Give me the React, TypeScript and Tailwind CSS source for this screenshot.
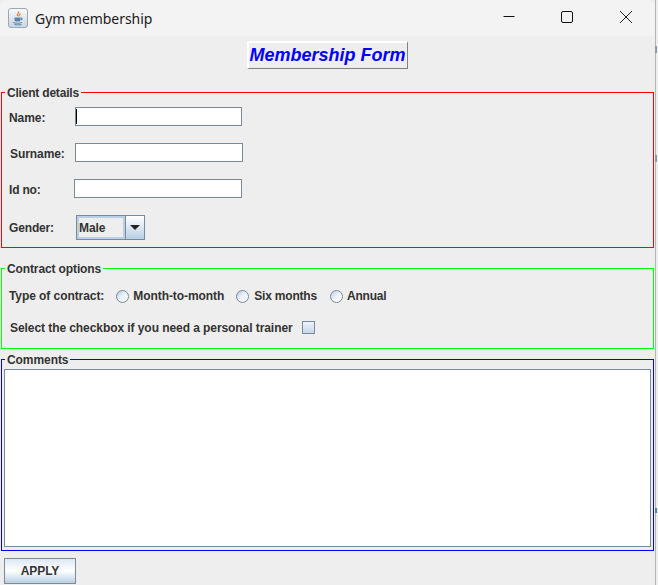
import React from "react";

const TextBox: React.FC<{ className?: string; caret?: boolean }> = ({ className = "", caret }) => (
  <div className={`h-[19px] bg-white border border-[#7a8a99] flex items-center ${className}`}>
    {caret && <div className="w-px h-[15px] bg-black" />}
  </div>
);

const Radio: React.FC<{ label: string; className?: string; labelClass?: string }> = ({ label, className = "", labelClass = "ml-[4px]" }) => (
  <div className={`flex items-center ${className}`}>
    <div className="w-[13px] h-[13px] rounded-full border border-[#7a8a99] bg-gradient-to-br from-[#b8cfe5] via-[#eef3f8] to-white" />
    <span className={labelClass}>{label}</span>
  </div>
);

const JavaIcon = () => (
  <div className="w-[20px] h-[20px] rounded-[3px] border border-[#9aa7b4] bg-gradient-to-b from-[#f7f9fb] to-[#c9d6e3] flex items-center justify-center">
    <svg width="16" height="16" viewBox="0 0 16 16" fill="none">
      <path d="M8.5 1.5c1 1.5-2 2.5-1 4.5M10 3.5c.5 1-1.5 1.5-1 3" stroke="#e8762c" strokeWidth="1.2" />
      <path d="M4.5 7.5h6v2.5c0 1-1 1.5-3 1.5s-3-.5-3-1.5z" fill="#5d84a8" />
      <path d="M10.5 8h1.5v1.5h-1.5" stroke="#5d84a8" />
      <path d="M3 12.5c2 1 7 1 9 0M4.5 14.5c2 .5 5 .5 7 0" stroke="#5d84a8" strokeWidth="1" />
    </svg>
  </div>
);

const App: React.FC = () => {
  return (
    <div className="w-[658px] h-[585px] bg-[#eeeeee] overflow-hidden font-['Liberation_Sans',Arial,sans-serif] text-[12px] font-bold tracking-[-0.07px] text-[#333333]">
      <div className="relative w-[656px] h-[585px] border-r border-[#b4b4b4] flex flex-col">
        {/* title bar */}
        <div className="h-[36px] shrink-0 bg-[#f3f3f3] rounded-t-[8px] flex items-center pl-[8px] pr-[6px] font-normal tracking-normal text-[#1a1a1a]">
          <JavaIcon />
          <span className="ml-[7px] font-['Noto_Sans',sans-serif] text-[14px] tracking-[-0.05px]">Gym membership</span>
          <div className="ml-auto flex items-center">
            <svg width="46" height="36" viewBox="0 0 46 36" className="text-[#111]">
              <path d="M17.5 16.5h11" stroke="currentColor" />
            </svg>
            <svg width="46" height="36" viewBox="0 0 46 36" className="ml-[12px] text-[#111]">
              <rect x="17.5" y="11.5" width="11" height="11" rx="1.5" stroke="currentColor" fill="none" />
            </svg>
            <svg width="46" height="36" viewBox="0 0 46 36" className="ml-[13px] text-[#222]">
              <path d="M17 11l12 12M29 11L17 23" stroke="currentColor" />
            </svg>
          </div>
        </div>

        {/* heading */}
        <div className="h-[49px] shrink-0 pt-[5px] flex justify-center">
          <div className="w-[161px] h-[28px] ml-[-1px] border-2 border-white border-r-[#808080] border-b-[#808080] border-r border-b flex items-center justify-center text-[18px] tracking-normal italic text-[#0000ff]">
            Membership Form
          </div>
        </div>

        {/* client details */}
        <fieldset className="h-[163px] ml-[1px] w-[653px] shrink-0 border border-[#ff0000] px-0">
          <legend className="ml-[3px] px-[2px] h-[14px] leading-[16px] tracking-[-0.2px]">Client details</legend>
          <div className="flex items-center mt-[8px] pl-[7px] h-[19px]">
            <span className="w-[66px] pt-[2px]">Name:</span>
            <TextBox className="w-[167px]" caret />
          </div>
          <div className="flex items-center mt-[17px] pl-[8px] h-[19px]">
            <span className="w-[65px] pt-[2px]">Surname:</span>
            <TextBox className="w-[168px]" />
          </div>
          <div className="flex items-center mt-[17px] pl-[7px] h-[19px]">
            <span className="w-[65px] pt-[2px] tracking-[-0.2px]">Id no:</span>
            <TextBox className="w-[168px]" />
          </div>
          <div className="flex items-center mt-[17px] pl-[7px] h-[25px]">
            <span className="w-[67px] tracking-[-0.15px]">Gender:</span>
            <div className="w-[69px] h-[25px] border border-[#7a8a99] flex">
              <div className="w-[48px] border-2 border-[#b8cfe5] bg-[#eeeeee] flex items-center">Male</div>
              <div className="flex-1 border-l border-[#7a8a99] bg-gradient-to-b from-white to-[#b8cfe5] flex items-center justify-center">
                <div className="w-0 h-0 border-l-[5px] border-r-[5px] border-t-[5px] border-l-transparent border-r-transparent border-t-[#222222]" />
              </div>
            </div>
          </div>
        </fieldset>

        {/* contract options */}
        <fieldset className="h-[88px] mt-[13px] ml-[1px] w-[653px] shrink-0 border border-[#00ff00]">
          <legend className="ml-[3px] px-[2px] h-[14px] leading-[16px] tracking-[-0.12px]">Contract options</legend>
          <div className="flex items-center mt-[13px] pl-[7px] h-[16px]">
            <span>Type of contract:</span>
            <Radio label="Month-to-month" className="ml-[12px]" />
            <Radio label="Six months" className="ml-[12px]" labelClass="ml-[5px] tracking-[-0.2px]" />
            <Radio label="Annual" className="ml-[13px]" labelClass="ml-[4px] tracking-[-0.2px]" />
          </div>
          <div className="flex items-center mt-[16px] pl-[8px] h-[14px]">
            <span className="pt-[2px]">Select the checkbox if you need a personal trainer</span>
            <div className="ml-[9px] w-[13px] h-[13px] border border-[#7a8a99] bg-gradient-to-b from-[#eef3f8] to-[#c5d7e9]" />
          </div>
        </fieldset>

        {/* comments */}
        <fieldset className="h-[199px] mt-[3px] ml-[1px] w-[653px] shrink-0 border border-[#0000ff]">
          <legend className="ml-[3px] px-[2px] h-[14px] leading-[16px]">Comments</legend>
          <div className="ml-[2px] mt-[3px] w-[647px] h-[178px] bg-white border border-[#7a8a99]" />
        </fieldset>

        {/* apply */}
        <div className="mt-[7px] ml-[4px]">
          <button className="w-[72px] h-[26px] border border-[#7a8a99] bg-gradient-to-b from-[#dde8f3] via-white to-[#b8cfe5] text-[#333333]">
            APPLY
          </button>
        </div>

        {/* stray window edge marks */}
        <div className="absolute right-[-2px] top-[46px] w-[2px] h-[7px] bg-[#8a9aa8]" />
        <div className="absolute right-[-2px] top-[155px] w-[2px] h-[7px] bg-[#8a9aa8]" />
        <div className="absolute right-[-2px] top-[508px] w-[2px] h-[5px] bg-[#4f7ea8]" />
      </div>
    </div>
  );
};

export default App;
